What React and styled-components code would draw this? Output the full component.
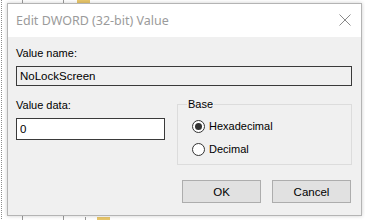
import React, { useState } from "react";
import styled, { createGlobalStyle } from "styled-components";

const GlobalStyle = createGlobalStyle`
  html, body {
    margin: 0;
    padding: 0;
    background: #ffffff;
  }
  * {
    box-sizing: border-box;
  }
`;

// tree view behind the dialog: dotted line on the left, tree stubs and folder bits
const Desktop = styled.div`
  width: 365px;
  height: 220px;
  overflow: hidden;
  padding: 3px 0 0 7px;
  background-color: #ffffff;
  background-image:
    repeating-linear-gradient(to bottom, #8c8c8c 0 1px, transparent 1px 2px),
    linear-gradient(#9a9a9a, #9a9a9a),
    linear-gradient(#9a9a9a, #9a9a9a),
    linear-gradient(#e8c66a, #e8c66a),
    linear-gradient(#9a9a9a, #9a9a9a),
    linear-gradient(#e8c66a, #e8c66a);
  background-size: 1px 220px, 1px 220px, 1px 220px, 13px 3px, 1px 4px, 13px 3px;
  background-position: 1px 0, 22px 0, 63px 0, 77px 0, 85px 217px, 97px 217px;
  background-repeat: no-repeat;
`;

const Dialog = styled.div`
  width: 355px;
  height: 213px;
  border: 1px solid #b4b4b4;
  background: #f0f0f0;
  box-shadow: 0 0 4px rgba(0, 0, 0, 0.2);
  display: flex;
  flex-direction: column;
`;

const TitleBar = styled.div`
  height: 33px;
  background: #ffffff;
  display: flex;
  align-items: center;
  justify-content: space-between;
  padding: 0 9px 1px 8px;
`;

const Title = styled.span`
  font-family: "Noto Sans", "Open Sans", sans-serif;
  font-size: 12.5px;
  color: #9b9b9b;
`;

const CloseBox = styled.button`
  width: 14px;
  height: 14px;
  padding: 0;
  border: none;
  background: transparent;
  display: flex;
  align-items: center;
  justify-content: center;
`;

const Body = styled.div`
  flex: 1;
  padding: 10px 9px 0 8px;
  display: flex;
  flex-direction: column;
  font-family: "Liberation Sans", Arial, sans-serif;
  font-size: 11px;
  color: #000000;
`;

const Label = styled.div`
  line-height: 13px;
  height: 13px;
  margin-bottom: 6px;
`;

const TextField = styled.input`
  display: block;
  width: ${(p) => p.$width}px;
  height: ${(p) => p.$height}px;
  border: 1px solid #3a3a3a;
  background: ${(p) => (p.readOnly ? "#f0f0f0" : "#ffffff")};
  font-family: "Liberation Sans", Arial, sans-serif;
  font-size: 11.5px;
  color: #000000;
  padding: 0 0 0 3px;
  outline: none;
`;

const Row = styled.div`
  display: flex;
  align-items: flex-start;
  margin-top: 12px;
`;

const Column = styled.div`
  display: flex;
  flex-direction: column;
  width: 149px;
  margin-top: 1px;
`;

const GroupBox = styled.fieldset`
  margin: 0 0 0 12px;
  width: 176px;
  height: 67px;
  border: 1px solid #dcdcdc;
  padding: 9px 0 0 14px;
  display: flex;
  flex-direction: column;
  gap: 10px;
`;

const Legend = styled.legend`
  margin-left: -5px;
  padding: 0 1px;
  line-height: 13px;
  font-size: 11px;
`;

const RadioRow = styled.label`
  display: flex;
  align-items: center;
  gap: 4px;
  height: 13px;
  line-height: 13px;
  cursor: default;
`;

const RadioCircle = styled.span`
  width: 13px;
  height: 13px;
  border-radius: 50%;
  border: 1px solid #333333;
  background: #ffffff;
  display: flex;
  align-items: center;
  justify-content: center;

  &::after {
    content: "";
    width: 7px;
    height: 7px;
    border-radius: 50%;
    background: ${(p) => (p.$checked ? "#333333" : "transparent")};
  }
`;

const ButtonRow = styled.div`
  display: flex;
  justify-content: flex-end;
  gap: 11px;
  margin-top: 15px;
  padding-right: 1px;
`;

const Button = styled.button`
  width: 79px;
  height: 23px;
  border: 1px solid #adadad;
  background: #e1e1e1;
  font-family: "Liberation Sans", Arial, sans-serif;
  font-size: 11.5px;
  color: #000000;
  padding: 0;
`;

const Radio = ({ checked, onPick, children }) => (
  <RadioRow onClick={onPick}>
    <RadioCircle $checked={checked} />
    {children}
  </RadioRow>
);

const App = () => {
  const [base, setBase] = useState("hex");
  const [data, setData] = useState("0");

  return (
    <>
      <GlobalStyle />
      <Desktop>
        <Dialog>
          <TitleBar>
            <Title>Edit DWORD (32-bit) Value</Title>
            <CloseBox>
              <svg width="12" height="12" viewBox="0 0 12 12">
                <path d="M0.5 0.5 L11.5 11.5 M11.5 0.5 L0.5 11.5" stroke="#8a8a8a" strokeWidth="1" fill="none" />
              </svg>
            </CloseBox>
          </TitleBar>
          <Body>
            <Label>Value name:</Label>
            <TextField $width={336} $height={20} readOnly value="NoLockScreen" />
            <Row>
              <Column>
                <Label>Value data:</Label>
                <TextField $width={149} $height={22} value={data} onChange={(e) => setData(e.target.value)} />
              </Column>
              <GroupBox>
                <Legend>Base</Legend>
                <Radio checked={base === "hex"} onPick={() => setBase("hex")}>Hexadecimal</Radio>
                <Radio checked={base === "dec"} onPick={() => setBase("dec")}>Decimal</Radio>
              </GroupBox>
            </Row>
            <ButtonRow>
              <Button>OK</Button>
              <Button>Cancel</Button>
            </ButtonRow>
          </Body>
        </Dialog>
      </Desktop>
    </>
  );
};

export default App;
